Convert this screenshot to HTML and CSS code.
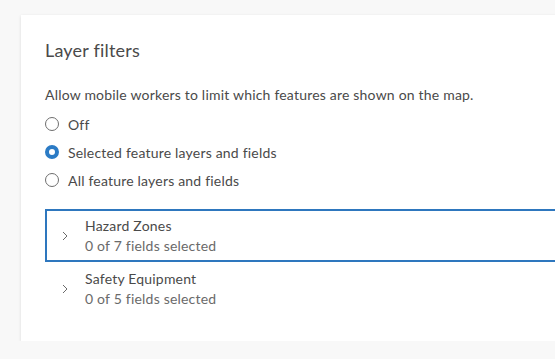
FILE: index.html
```html
<!DOCTYPE html>
<html>
<head>
<meta charset="utf-8">
<link rel="stylesheet" href="styles.css">
</head>
<body>
<div class="card">
  <h2 class="title">Layer filters</h2>
  <p class="desc">Allow mobile workers to limit which features are shown on the map.</p>
  <div class="radios">
    <label class="radio"><span class="dot"></span>Off</label>
    <label class="radio"><span class="dot checked"></span>Selected feature layers and fields</label>
    <label class="radio"><span class="dot"></span>All feature layers and fields</label>
  </div>
  <ul class="list">
    <li class="item active">
      <svg class="chev" width="8" height="10" viewBox="0 0 8 10"><path d="M2 1 L6 5 L2 9" fill="none" stroke="#6a6a6a" stroke-width="1"/></svg>
      <div class="text">
        <div class="name">Hazard Zones</div>
        <div class="sub">0 of 7 fields selected</div>
      </div>
    </li>
    <li class="item">
      <svg class="chev" width="8" height="10" viewBox="0 0 8 10"><path d="M2 1 L6 5 L2 9" fill="none" stroke="#6a6a6a" stroke-width="1"/></svg>
      <div class="text">
        <div class="name">Safety Equipment</div>
        <div class="sub">0 of 5 fields selected</div>
      </div>
    </li>
  </ul>
</div>
</body>
</html>
```

FILE: styles.css
```css
html, body {
  margin: 0;
  padding: 0;
  background: #f8f8f8;
  overflow: hidden;
}
body {
  padding: 15px 0 0 21px;
  font-family: "Lato", "Open Sans", sans-serif;
  font-variant-ligatures: none;
  letter-spacing: 0.2px;
  color: #4a4a4a;
}
.card {
  width: 600px;
  height: 326px;
  box-sizing: border-box;
  background: #fff;
  box-shadow: 0 1px 3px rgba(0,0,0,0.12);
  padding: 24px 0 0 24px;
}
.title {
  margin: 0;
  font-size: 18px;
  font-weight: 400;
  line-height: 22px;
  color: #4a4a4a;
}
.desc {
  margin: 24px 0 0;
  font-size: 14px;
  line-height: 20px;
  color: #4a4a4a;
}
.radios {
  margin-top: 5px;
  display: flex;
  flex-direction: column;
}
.radio {
  display: flex;
  align-items: center;
  height: 28px;
  font-size: 14px;
  color: #4a4a4a;
}
.dot {
  width: 12px;
  height: 12px;
  border: 1px solid #6e6e6e;
  border-radius: 50%;
  margin-right: 9px;
  box-sizing: content-box;
}
.dot.checked {
  width: 6px;
  height: 6px;
  border: 4px solid #2b7bc5;
  background: #fff;
}
.list {
  list-style: none;
  margin: 15px 0 0;
  padding: 0;
}
.item {
  display: flex;
  align-items: center;
  height: 53px;
  box-sizing: border-box;
  border: 2px solid transparent;
  padding-left: 14px;
}
.item.active {
  border-color: #2e77be;
}
.chev {
  margin-right: 16px;
}
.name {
  font-size: 14px;
  line-height: 20px;
  color: #4a4a4a;
}
.sub {
  font-size: 14px;
  line-height: 20px;
  color: #6a6a6a;
}
```
